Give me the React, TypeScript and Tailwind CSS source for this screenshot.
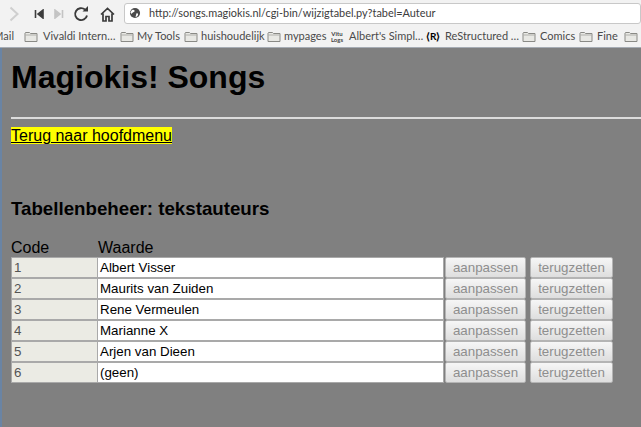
import React from "react";

const Folder = () => (
  <svg width="14" height="12" viewBox="0 0 14 12" className="shrink-0">
    <path d="M1 3V10.5H13V2.5H6.5L5.5 1.5H1.5L1 2Z" fill="#e8e8e4" stroke="#8a8a86" strokeWidth="1" />
    <path d="M1 4H13" stroke="#b0b0ac" strokeWidth="1" />
  </svg>
);

const Bm = ({ w, label, icon, gap = 5 }: { w: number; label: string; icon?: React.ReactNode; gap?: number }) => (
  <div className="flex items-center shrink-0 overflow-hidden" style={{ width: w, gap }}>
    {icon ?? <Folder />}
    {label && <span className="whitespace-nowrap">{label}</span>}
  </div>
);

const rows = ["Albert Visser", "Maurits van Zuiden", "Rene Vermeulen", "Marianne X", "Arjen van Dieen", "(geen)"];

const btn =
  "h-[21px] rounded-[2px] border border-[#b4b4b4] bg-gradient-to-b from-[#f6f6f6] to-[#dedede] text-[#8e8e8e] text-[13.33px] leading-[19px] text-center";

export default function App() {
  return (
    <div className="w-[641px] h-[427px] overflow-hidden bg-[#808080] flex flex-col font-['Liberation_Sans',sans-serif] text-black">
      <div className="h-[27px] bg-[#f2f2f2] flex items-center relative shrink-0">
        <svg width="11" height="16" viewBox="0 0 11 16" className="ml-[9px] mt-[1px]">
          <path d="M1.5 1.5L8.5 8L1.5 14.5" fill="none" stroke="#cfcfcf" strokeWidth="2" />
        </svg>
        <svg width="10" height="10" viewBox="0 0 10 10" className="ml-[14px] mt-[1px]">
          <path d="M1.5 1V9M9 1L4 5L9 9Z" fill="#3c3c3c" stroke="#3c3c3c" strokeWidth="1.6" />
        </svg>
        <svg width="10" height="10" viewBox="0 0 10 10" className="ml-[10px] mt-[1px]">
          <path d="M8.5 1V9M1 1L6 5L1 9Z" fill="#c4c4c4" stroke="#c4c4c4" strokeWidth="1.6" />
        </svg>
        <svg width="16" height="16" viewBox="0 0 16 16" className="ml-[9px] mt-[1px]">
          <path d="M14 9.5A6 6 0 1 1 12 3.5" fill="none" stroke="#3a3a3a" strokeWidth="1.9" />
          <path d="M9.5 5.5H15V0Z" fill="#3a3a3a" />
        </svg>
        <svg width="15" height="15" viewBox="0 0 15 15" className="ml-[11px] mt-[1px]">
          <path d="M1 7.5L7.5 1.5L14 7.5M3 6.5V14H6V9.5H9V14H12V6.5" fill="none" stroke="#3a3a3a" strokeWidth="1.7" />
        </svg>
        <div className="ml-[9px] w-[517px] h-[21px] mt-[-1px] bg-white border border-[#c8c8c8] rounded-[3px] flex items-center font-['Lato',sans-serif] text-[10.9px] text-[#3c3c3c]">
          <svg width="12" height="12" viewBox="0 0 13 13" className="ml-[4px]">
            <circle cx="6.5" cy="6.5" r="5.5" fill="#4a4a4a" />
            <path d="M3 3.5C5 2.5 6.5 3.5 6 5C5 6 3.5 6 3 7.5L1.5 6ZM8 7C10 6.5 10.5 8 9 10L7 11Z" fill="#fff" />
          </svg>
          <span className="ml-[8px] whitespace-nowrap">http://songs.magiokis.nl/cgi-bin/wijzigtabel.py?tabel=Auteur</span>
        </div>
      </div>
      <div className="h-[21px] bg-[#f2f2f2] border-b border-[#a6acb4] flex items-center font-['Lato',sans-serif] text-[11px] text-[#4a4a4a] shrink-0 overflow-hidden pb-[1px]">
        <div className="w-[24px] shrink-0 overflow-hidden flex justify-end pr-[10px]">
          <span className="whitespace-nowrap">Mail</span>
        </div>
        <Bm w={96} label="Vivaldi Intern…" />
        <Bm w={64} gap={3} label="My Tools" />
        <Bm w={83} gap={3} label="huishoudelijk" />
        <Bm w={63} gap={3} label="mypages" />
        <Bm
          w={96}
          label="Albert's Simpl…"
          icon={
            <span className="w-[14px] text-[6px] leading-[6px] text-[#444] text-center font-bold shrink-0">
              Vitu
              <br />
              Logs
            </span>
          }
        />
        <Bm
          w={96}
          label="ReStructured …"
          icon={<span className="w-[14px] text-[10px] text-black text-center font-bold shrink-0">⟨R⟩</span>}
        />
        <Bm w={57} gap={4} label="Comics" />
        <Bm w={45} gap={4} label="Fine" />
        <Bm w={17} label="" />
      </div>
      <div className="flex-1 border-l-2 border-[#6a84a4] pl-[9px] pt-[16px] pr-0">
        <h1 className="text-[32px] leading-[27px] h-[28px] font-bold">Magiokis! Songs</h1>
        <div className="h-[2px] bg-[#dcdcdc] mt-[25px]" />
        <div className="mt-[9px] h-[16px] text-[16px] leading-[16px]">
          <a className="bg-[#ffff00] underline">Terug naar hoofdmenu</a>
        </div>
        <h2 className="text-[18.72px] leading-[20px] font-bold mt-[55px]">Tabellenbeheer: tekstauteurs</h2>
        <div className="flex text-[16px] leading-[18px] mt-[20px] h-[18px]">
          <span className="w-[87px]">Code</span>
          <span>Waarde</span>
        </div>
        <div className="flex flex-col">
          {rows.map((name, i) => (
            <div key={i} className="flex h-[21px] text-[13.33px] leading-[19px]">
              <div className="w-[87px] h-[21px] shrink-0 bg-[#ebebe4] border border-[#a9a9a9] pl-[2px] text-[#545454]">{i + 1}</div>
              <div className="w-[347px] h-[21px] ml-[-1px] shrink-0 bg-white border border-[#a9a9a9] pl-[2px] text-black">{name}</div>
              <div className={`w-[81px] ml-[1px] shrink-0 ${btn}`}>aanpassen</div>
              <div className={`w-[83px] ml-[4px] shrink-0 ${btn}`}>terugzetten</div>
            </div>
          ))}
        </div>
      </div>
    </div>
  );
}
